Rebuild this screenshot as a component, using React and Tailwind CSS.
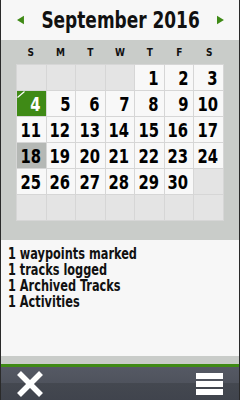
import React from "react";

const font = { fontFamily: '"DejaVu Sans Condensed", "DejaVu Sans", sans-serif' };

const days = [];
for (let i = 0; i < 4; i++) days.push(null);
for (let d = 1; d <= 30; d++) days.push(d);
while (days.length < 42) days.push(null);

function Cell({ d }) {
  if (d === null) return <div className="bg-[#e4e4e4]" />;
  if (d === 4)
    return (
      <div className="relative bg-[#3f8a16] flex items-center justify-end pr-[5px] overflow-hidden">
        <svg className="absolute left-0 top-0" width="9" height="8" viewBox="0 0 9 8">
          <line x1="0.5" y1="6.5" x2="7.5" y2="0.5" stroke="#ffffff" strokeWidth="1.2" />
        </svg>
        <span className="inline-block origin-right scale-x-[0.82] text-white text-[20px] font-bold leading-none whitespace-nowrap">{d}</span>
      </div>
    );
  return (
    <div className={`${d === 18 ? "bg-[#b5b8b5]" : "bg-[#f8f8f8]"} flex items-center justify-end pr-[5px] overflow-hidden`}>
      <span className="inline-block origin-right scale-x-[0.82] text-black text-[20px] font-bold leading-none whitespace-nowrap">{d}</span>
    </div>
  );
}

export default function App() {
  return (
    <div className="w-[240px] h-[400px] flex flex-col bg-[#f7f7f7] border-x border-[#2a2a2a] overflow-hidden" style={font}>
      <div className="h-[40px] shrink-0 flex items-center justify-between pl-[16px] pr-[15px] bg-[#f7f7f7]">
        <svg width="8" height="10" viewBox="0 0 8 10"><polygon points="8,0 8,10 0,5" fill="#3f8a16" /></svg>
        <span className="inline-block scale-x-[0.82] text-[23px] font-bold text-[#111] whitespace-nowrap">September 2016</span>
        <svg width="8" height="10" viewBox="0 0 8 10"><polygon points="0,0 0,10 8,5" fill="#3f8a16" /></svg>
      </div>
      <div className="h-[200px] shrink-0 bg-[#c9ccc9] flex flex-col px-[15px]">
        <div className="h-[24px] grid grid-cols-7 items-center">
          {["S", "M", "T", "W", "T", "F", "S"].map((l, i) => (
            <span key={i} className="text-center text-[10px] font-bold text-[#111]">{l}</span>
          ))}
        </div>
        <div className="grid grid-cols-7 grid-rows-6 gap-px bg-[#d6d6d6] h-[157px] border border-[#d6d6d6]">
          {days.map((d, i) => (
            <Cell key={i} d={d} />
          ))}
        </div>
      </div>
      <div className="flex-1 bg-[#f7f7f7] pt-[6px] px-[7px] text-[15px] font-bold leading-[16px] text-[#111] whitespace-nowrap">
        {["1 waypoints marked", "1 tracks logged", "1 Archived Tracks", "1 Activities"].map((t) => (
          <div key={t}>
            <span className="inline-block origin-left scale-x-[0.84]">{t}</span>
          </div>
        ))}
      </div>
      <div className="h-[8px] shrink-0 bg-[#c9ccc9]" />
      <div className="h-[3px] shrink-0 bg-[#3f8a16]" />
      <div className="h-[33px] shrink-0 bg-[linear-gradient(#555964_0%,#4f535d_48%,#444850_49%,#40444d_100%)] flex items-center justify-between pl-[15px] pr-[16px]">
        <svg width="28" height="26" viewBox="0 0 28 26">
          <line x1="3" y1="2" x2="25" y2="24" stroke="#fff" strokeWidth="5.5" />
          <line x1="25" y1="2" x2="3" y2="24" stroke="#fff" strokeWidth="5.5" />
        </svg>
        <svg width="27" height="22" viewBox="0 0 27 22">
          <rect x="0" y="0" width="27" height="6" fill="#fff" />
          <rect x="0" y="8" width="27" height="6" fill="#fff" />
          <rect x="0" y="16" width="27" height="6" fill="#fff" />
        </svg>
      </div>
    </div>
  );
}
